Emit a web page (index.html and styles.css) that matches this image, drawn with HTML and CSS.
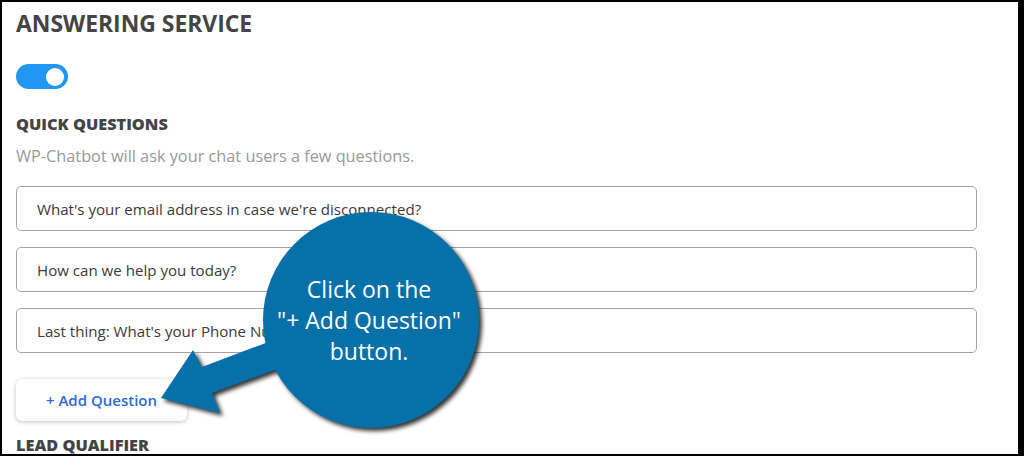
FILE: index.html
```html
<!DOCTYPE html>
<html lang="en">
<head>
    <meta charset="UTF-8">
    <meta name="viewport" content="width=device-width, initial-scale=1.0">
    <title>Answering Service</title>
    <link rel="stylesheet" href="styles.css">
</head>
<body>
    <div class="frame">
        <div class="settings">
            <h2 class="section-title">ANSWERING SERVICE</h2>

            <div class="toggle on">
                <span class="knob"></span>
            </div>

            <h3 class="sub-title">QUICK QUESTIONS</h3>
            <p class="hint">WP-Chatbot will ask your chat users a few questions.</p>

            <div class="question-list">
                <input type="text" class="question" value="What's your email address in case we're disconnected?">
                <input type="text" class="question" value="How can we help you today?">
                <input type="text" class="question" value="Last thing: What's your Phone Number?">
            </div>

            <button class="add-btn">+ Add Question</button>

            <h3 class="sub-title lead">LEAD QUALIFIER</h3>
        </div>

        <!-- annotation drawn over the screenshot -->
        <div class="callout-shape">
            <svg width="1024" height="456" viewBox="0 0 1024 456">
                <polygon points="161,398 193,350 202,367 300,330 310,357 212,393 220,413" fill="#0670a9"/>
                <circle cx="371" cy="320" r="108" fill="#0670a9"/>
            </svg>
        </div>
        <div class="callout-text">
            Click on the<br>
            "+ Add Question"<br>
            button.
        </div>
    </div>
</body>
</html>
```

FILE: styles.css
```css
* {
    box-sizing: border-box;
}

body {
    margin: 0;
    padding: 0;
    background-color: #000;
    overflow: hidden;
}

.frame {
    position: relative;
    width: 1024px;
    height: 456px;
    border: 2px solid #000;
    border-right-width: 6px;
    background-color: #fff;
    overflow: hidden;
}

.settings {
    padding: 6px 41px 0 14px;
    font-family: "Open Sans", sans-serif;
    color: #444;
}

.section-title {
    margin: 0;
    font-size: 22.9px;
    line-height: 32px;
    font-weight: 700;
    color: #444;
}

.toggle {
    width: 52px;
    height: 25px;
    margin-top: 24px;
    border-radius: 13px;
    background-color: #ccc;
    display: flex;
    align-items: center;
    padding: 0 4px;
}

.toggle.on {
    background-color: #2196f3;
    justify-content: flex-end;
}

.knob {
    width: 18px;
    height: 18px;
    border-radius: 50%;
    background-color: #fff;
}

.sub-title {
    margin: 23px 0 0;
    font-size: 16.3px;
    line-height: 24px;
    font-weight: 800;
    color: #444;
}

.hint {
    margin: 9px 0 0;
    font-size: 16.3px;
    line-height: 22px;
    color: #999;
}

.question-list {
    display: flex;
    flex-direction: column;
    gap: 16px;
    margin-top: 19px;
}

.question {
    width: 100%;
    height: 45px;
    padding: 0 20px;
    border: 1px solid #a3a3a3;
    border-radius: 5px;
    font-family: "Open Sans", sans-serif;
    font-size: 15.1px;
    color: #3a3a3a;
    background-color: #fff;
    outline: none;
}

.add-btn {
    display: block;
    width: 171px;
    height: 42px;
    margin-top: 26px;
    border: none;
    border-radius: 6px;
    background-color: #fff;
    box-shadow: 0 1px 4px rgba(0, 0, 0, 0.25);
    font-family: "Open Sans", sans-serif;
    font-size: 15px;
    font-weight: 600;
    color: #2f6ad9;
    cursor: pointer;
}

.sub-title.lead {
    margin-top: 12px;
}

.callout-shape {
    position: absolute;
    top: -2px;
    left: -2px;
    width: 1024px;
    height: 456px;
    filter: drop-shadow(3px 3px 2px rgba(0, 0, 0, 0.8));
    pointer-events: none;
}

.callout-shape svg {
    display: block;
}

.callout-text {
    position: absolute;
    left: 259px;
    top: 272px;
    width: 216px;
    text-align: center;
    font-family: "Open Sans", sans-serif;
    font-size: 23px;
    line-height: 31px;
    color: #fff;
}
```
